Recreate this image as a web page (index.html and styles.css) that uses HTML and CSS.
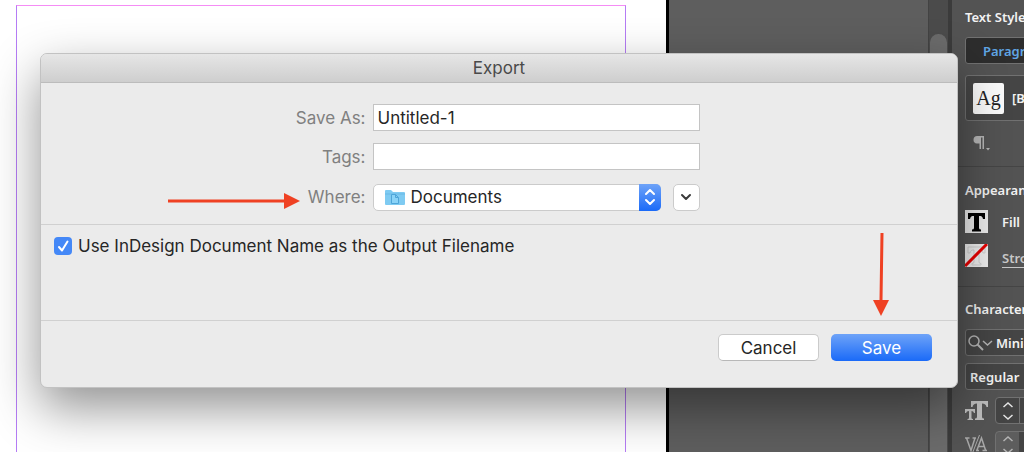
FILE: index.html
```html
<!DOCTYPE html>
<html lang="en">
<head>
<meta charset="utf-8">
<title>Export</title>
<link rel="stylesheet" href="styles.css">
</head>
<body>
<div class="workspace">
  <main class="page"><div class="margins"></div></main>
  <div class="pasteboard"></div>
  <div class="scrollbar"><div class="thumb"></div></div>
  <aside class="panel">
    <section class="group group-styles">
      <h2 class="heading">Text Styles</h2>
      <button class="tab" type="button">Paragraph Styles</button>
      <button class="style-picker" type="button"><span class="swatch">Ag</span><span>[Basic Paragraph]</span></button>
      <svg class="pilcrow" width="20" height="18" viewBox="0 0 20 18" aria-hidden="true"><path d="M5.500 1H12V14H10.500V2.500H9V14H7.500V8.500H5A3.700 3.700 0 0 1 5.500 1Z" fill="#b4b4b4"/><path d="M14 13h4l-2 2.500z" fill="#b4b4b4"/></svg>
    </section>
    <section class="group group-appearance">
      <h2 class="heading">Appearance</h2>
      <div class="paint">
        <svg width="23" height="23" viewBox="0 0 23 23" aria-hidden="true"><rect width="23" height="23" fill="#e9e9e9"/><path d="M3 3H20V9H18C17.500 6.500 16.500 6 14 6V18Q14 19.500 16 19.500V21.500H7V19.500Q9 19.500 9 18V6C6.500 6 5.500 6.500 5 9H3Z" fill="#000"/></svg>
        <span>Fill</span>
      </div>
      <div class="paint">
        <svg width="23" height="23" viewBox="0 0 23 23" aria-hidden="true"><rect width="23" height="23" fill="#ececec"/><path d="M3 3H20V9H18C17.500 6.500 16.500 6 14 6V18Q14 19.500 16 19.500V21H7V19.500Q9 19.500 9 18V6C6.500 6 5.500 6.500 5 9H3Z" fill="none" stroke="#cfcfcf"/><path d="M0 22L22 0" stroke="#e60000" stroke-width="3"/></svg>
        <a class="stroke-link" href="#stroke">Stroke</a>
      </div>
    </section>
    <section class="group group-character">
      <h2 class="heading">Character</h2>
      <button class="combo combo-search" type="button">
        <svg width="25" height="18" viewBox="0 0 25 18" fill="none" stroke="#b4b4b4" aria-hidden="true"><circle cx="6" cy="7" r="5" stroke-width="1.500"/><path d="M9.500 10.500L15 16" stroke-width="2"/><path d="M15 7L19.500 11L24 7" stroke-width="1.500"/></svg>
        <span>Minion Pro</span>
      </button>
      <button class="combo" type="button">Regular</button>
      <div class="metric">
        <svg width="24" height="20" viewBox="0 0 24 20" fill="#bcbcbc" aria-hidden="true"><path d="M6 0H23V6H21.500Q21 2.500 17 2.500V16Q17 17.500 19 17.500V19H10V17.500Q12 17.500 12 16V2.500Q8 2.500 7.500 6H6Z"/><path d="M0 8H10V12H9Q8.500 10 6.500 10V17Q6.500 18 8 18V19H2.500V18Q4 18 4 17V10Q1.500 10 1 12H0Z"/></svg>
        <span class="stepper"><svg width="12" height="20" viewBox="0 0 12 20" fill="none" stroke="#e4e4e4" stroke-width="1.500" aria-hidden="true"><path d="M1.500 6L6 2L10.500 6M1.500 14L6 18L10.500 14"/></svg></span>
      </div>
      <div class="metric">
        <svg width="24" height="20" viewBox="0 0 24 20" fill="none" stroke="#a8a8a8" aria-hidden="true"><path d="M0 3H4.500M7.500 3H11M1.500 3L6 15.500L10 3" stroke-width="1.500"/><path d="M14.500 0L7.500 18"/><path d="M11 15.500H14M17.500 15.500H22M12 15L16.500 3L20.500 15M14 11.500H19" stroke-width="1.500"/></svg>
        <span class="stepper stepper-filled"><svg width="12" height="20" viewBox="0 0 12 20" fill="none" stroke="#b4b4b4" stroke-width="1.500" aria-hidden="true"><path d="M1.500 6L6 2L10.500 6M1.500 14L6 18L10.500 14"/></svg></span>
      </div>
    </section>
  </aside>

  <form class="dialog" role="dialog" aria-labelledby="dialog-title">
    <h1 class="title" id="dialog-title">Export</h1>
    <div class="fields">
      <label class="label" for="save-as">Save As:</label>
      <input class="textbox" id="save-as" type="text" value="Untitled-1">
      <label class="label" for="tags">Tags:</label>
      <input class="textbox" id="tags" type="text">
      <label class="label" for="where">Where:</label>
      <div class="where">
        <div class="popup">
          <select class="select" id="where"><option>Documents</option></select>
          <svg class="folder" width="20" height="17" viewBox="0 0 20 17" aria-hidden="true"><path d="M0 2Q0 1 1 1H6L8 3H19Q20 3 20 4V15Q20 16 19 16H1Q0 16 0 15Z" fill="#7fcbf2"/><path d="M0 5H20" stroke="#6bb9e6"/><path d="M6.500 5.500H10.500L13.500 8.500V14.500H6.500ZM10.500 5.500V8.500H13.500" fill="#8ad3f7" stroke="#4ea5d8"/></svg>
          <span class="arrows"><svg width="10" height="16" viewBox="0 0 10 16" fill="none" stroke="#fff" stroke-width="2" stroke-linecap="round" stroke-linejoin="round" aria-hidden="true"><path d="M1 5L5 1L9 5M1 11L5 15L9 11"/></svg></span>
        </div>
        <button class="expand" type="button" aria-label="Expand"><svg width="12" height="8" viewBox="0 0 12 8" fill="none" stroke="#3a3a3a" stroke-width="2" stroke-linecap="round" stroke-linejoin="round" aria-hidden="true"><path d="M2 2L6 6L10 2"/></svg></button>
      </div>
    </div>
    <div class="options">
      <label class="option"><input class="checkbox" type="checkbox" checked><span>Use InDesign Document Name as the Output Filename</span></label>
    </div>
    <div class="actions">
      <button class="button" type="button">Cancel</button>
      <button class="button button-primary" type="submit">Save</button>
    </div>
    <svg class="pointer pointer-where" width="132" height="16" viewBox="0 0 132 16" fill="#ef4123" aria-hidden="true"><path d="M0 6.500H116V0L132 8L116 16V9.500H0Z"/></svg>
    <svg class="pointer pointer-save" width="16" height="83" viewBox="0 0 16 83" fill="#ef4123" aria-hidden="true"><path d="M7.500 0H10.500L9.500 67H16L8 83L0 67H6.500Z"/></svg>
  </form>
</div>
</body>
</html>
```
FILE: styles.css
```css
* { box-sizing: border-box; }

body {
  margin: 0;
  font-family: Inter, "Liberation Sans", sans-serif;
  font-size: 17px;
  color: #262626;
}

button, input, select { font: inherit; color: inherit; }

.workspace {
  position: relative;
  display: flex;
  height: 100vh;
  overflow: hidden;
  background: #5e5e5e;
}

.page {
  flex: 1;
  display: flex;
  padding: 5px 40px 0 16px;
  background: #fff;
  border-right: 3px solid #000;
}

.margins {
  flex: 1;
  border: 1px solid #b57cf5;
  border-top-color: #f58cf5;
  border-bottom: 0;
}

.pasteboard { width: 259px; }

.scrollbar {
  width: 20px;
  padding: 34px 1px 0;
  background: #4b4b4b;
  border-left: 1px solid #434343;
}

.thumb {
  height: 100%;
  border-radius: 9px 9px 0 0;
  background: #6b6b6b;
}

.panel {
  width: 76px;
  overflow: hidden;
  border-left: 4px solid #3b3b3b;
  background: #535353;
  color: #f2f2f2;
  font-family: "Noto Sans", sans-serif;
  font-size: 13px;
  font-weight: 600;
  line-height: 18px;
  white-space: nowrap;
}

.group {
  display: flex;
  flex-direction: column;
  width: 240px;
  padding: 0 13px;
  border-bottom: 1px solid #454545;
}

.group-styles { height: 167px; padding-top: 8px; }
.group-appearance { height: 120px; padding-top: 14px; }
.group-character { padding-top: 13px; gap: 7px; border-bottom: 0; }

.heading { margin: 0; font-size: 13px; font-weight: 600; }

.tab {
  height: 27px;
  margin-top: 11px;
  padding: 0 17px;
  border: 1px solid #717171;
  border-radius: 3px;
  background: #2d2d2d;
  color: #60a6e6;
  text-align: left;
}

.style-picker {
  display: flex;
  align-items: center;
  gap: 8px;
  height: 46px;
  margin-top: 11px;
  padding: 0 7px;
  border: 1px solid #717171;
  border-radius: 3px;
  background: #454545;
}

.swatch {
  width: 31px;
  border-radius: 2px;
  background: #fafafa;
  color: #222;
  font: 20px/31px "Liberation Serif", serif;
  text-align: center;
}

.pilcrow { margin: 14px 0 0 7px; }

.paint {
  display: flex;
  align-items: center;
  gap: 14px;
  margin-top: 11px;
}

.stroke-link { margin-top: 4px; color: #c8c8c8; text-underline-offset: 4px; }

.combo {
  display: flex;
  align-items: center;
  gap: 3px;
  height: 27px;
  padding: 0 4px;
  border: 1px solid #717171;
  border-radius: 3px;
  background: #454545;
}

.group-character .heading { margin-bottom: 4px; }
.combo-search { padding: 0 2px; }

.metric { display: flex; align-items: center; gap: 6px; }

.stepper {
  display: flex;
  align-items: center;
  width: 80px;
  height: 27px;
  padding-left: 6px;
  border: 1px solid #717171;
  border-radius: 4px;
  background: linear-gradient(90deg, #444 23px, #717171 23px, #717171 24px, #444 24px);
}

.stepper-filled { background: linear-gradient(90deg, #5d5d5d 23px, #444 23px); }

.dialog {
  position: absolute;
  top: 53px;
  left: 40px;
  right: 66px;
  border: 1px solid #c2c2c2;
  border-radius: 7px;
  background: #ebebeb;
  box-shadow: 0 20px 50px rgba(0, 0, 0, 0.43);
}

.title {
  margin: 0;
  border-bottom: 1px solid #bcbcbc;
  border-radius: 6px 6px 0 0;
  background: linear-gradient(#e6e6e6, #cecece);
  color: #4a4a4a;
  font-size: 17px;
  font-weight: 400;
  line-height: 28px;
  text-align: center;
}

.fields {
  display: grid;
  grid-template-columns: 1fr 327px 1fr;
  grid-template-rows: 27px 27px 30px;
  align-items: center;
  row-gap: 12px;
  column-gap: 7px;
  padding: 21px 0 12px 74px;
  border-bottom: 1px solid #d0d0d0;
}

.label { grid-column: 1; color: #808080; text-align: right; }

.textbox {
  width: 100%;
  height: 27px;
  padding: 0 4px;
  border: 1px solid #c4c4c4;
  border-radius: 0;
  background: #fff;
}

.where { display: flex; gap: 12px; }
.popup { position: relative; flex: 1; }

.select {
  display: block;
  width: 100%;
  height: 27px;
  padding: 0 37px;
  border: 1px solid #cbcbcb;
  border-radius: 5px;
  background: #fff;
  appearance: none;
}

.folder { position: absolute; top: 5px; left: 12px; pointer-events: none; }

.arrows {
  position: absolute;
  top: 0;
  right: 0;
  display: grid;
  place-items: center;
  width: 22px;
  height: 27px;
  border-radius: 0 5px 5px 0;
  background: linear-gradient(#6ea3f8, #1a6af8);
  pointer-events: none;
}

.expand {
  display: grid;
  place-items: center;
  width: 27px;
  height: 27px;
  padding: 0;
  border: 1px solid #cbcbcb;
  border-radius: 5px;
  background: #fff;
}

.options {
  min-height: 96px;
  padding: 10px 13px;
  border-bottom: 1px solid #d0d0d0;
}

.option {
  display: inline-flex;
  align-items: center;
  gap: 6px;
  line-height: 22px;
}

.checkbox {
  width: 18px;
  height: 18px;
  margin: 0;
  border-radius: 4px;
  background: #4488f7 url("data:image/svg+xml,%3Csvg xmlns='http://www.w3.org/2000/svg' viewBox='0 0 18 18'%3E%3Cpath d='M5 10L8 13.500L13.500 4.500' fill='none' stroke='white' stroke-width='2' stroke-linecap='round' stroke-linejoin='round'/%3E%3C/svg%3E");
  appearance: none;
}

.actions {
  display: flex;
  justify-content: flex-end;
  gap: 12px;
  padding: 13px 25px 26px;
}

.button {
  width: 101px;
  height: 27px;
  padding: 0;
  border: 1px solid #cbcbcb;
  border-bottom-color: #b8b8b8;
  border-radius: 5px;
  background: #fff;
}

.button-primary {
  border: 0;
  background: linear-gradient(#6ea3f8, #1a6af8);
  color: #fff;
}

.pointer { position: absolute; pointer-events: none; }
.pointer-where { top: 139px; left: 127px; }
.pointer-save { top: 179px; right: 68px; }
```
